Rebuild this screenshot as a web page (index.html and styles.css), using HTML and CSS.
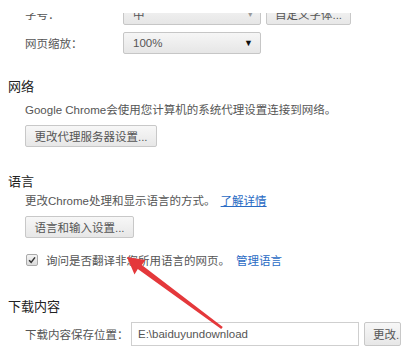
FILE: index.html
```html
<!DOCTYPE html>
<html lang="zh-CN">
<head>
<meta charset="utf-8">
<title>设置</title>
<link rel="stylesheet" href="styles.css">
</head>
<body>
<div class="page">
  <div class="clip">
    <div class="row">
      <span class="label">字号：</span>
      <span class="select"><span>中</span><span class="caret small">▾</span></span>
      <span class="btn font-btn">自定义字体...</span>
    </div>
  </div>
  <div class="row zoom-row">
    <span class="label">网页缩放：</span>
    <span class="select"><span>100%</span><span class="caret">▼</span></span>
  </div>

  <section class="sec net">
    <h3>网络</h3>
    <p>Google Chrome会使用您计算机的系统代理设置连接到网络。</p>
    <span class="btn proxy-btn">更改代理服务器设置...</span>
  </section>

  <section class="sec lang">
    <h3>语言</h3>
    <p>更改Chrome处理和显示语言的方式。 <a class="link" href="#">了解详情</a></p>
    <span class="btn lang-btn">语言和输入设置...</span>
    <div class="check-row">
      <span class="checkbox"><svg viewBox="0 0 12 12" width="12" height="12"><path d="M2.5 6.2 L5 8.8 L9.6 2.8" fill="none" stroke="#333" stroke-width="1.8"/></svg></span>
      <span>询问是否翻译非您所用语言的网页。</span>
      <a class="link" href="#">管理语言</a>
    </div>
  </section>

  <section class="sec dl">
    <h3>下载内容</h3>
    <div class="dl-row">
      <span class="dl-label">下载内容保存位置：</span>
      <span class="input">E:\baiduyundownload</span>
      <span class="btn change-btn">更改...</span>
    </div>
  </section>

  <svg class="arrow" width="416" height="353" viewBox="0 0 416 353">
    <defs><filter id="soft"><feGaussianBlur stdDeviation="0.5"/></filter></defs>
    <polygon filter="url(#soft)" fill="#e4383b" points="127,244 145.5,247 141.8,252 222.8,314.1 221.2,315.9 137.8,256 134.5,261.5"/>
  </svg>
</div>
</body>
</html>
```

FILE: styles.css
```css
html, body {
  margin: 0;
  padding: 0;
  background: #fff;
}
body {
  font-family: "Liberation Sans", "Noto Sans CJK SC", sans-serif;
  font-size: 11.5px;
  color: #444;
  width: 416px;
  height: 353px;
  overflow: hidden;
}
.page {
  position: relative;
  width: 416px;
  height: 353px;
  padding-left: 8px;
  box-sizing: border-box;
}
.clip {
  margin-top: 13px;
  height: 12px;
  overflow: hidden;
  display: flex;
  flex-direction: column;
  justify-content: flex-end;
}
.row {
  display: flex;
  align-items: center;
  flex-shrink: 0;
  padding-left: 17px;
}
.label {
  width: 98px;
  color: #555;
  white-space: nowrap;
}
.select {
  box-sizing: border-box;
  width: 138px;
  height: 23px;
  display: flex;
  align-items: center;
  justify-content: space-between;
  padding: 0 7px 0 9px;
  border: 1px solid #c6c6c6;
  border-radius: 2px;
  background: linear-gradient(#f6f6f6, #e6e6e6);
  color: #555;
}
.caret {
  font-size: 9px;
  color: #111;
}
.caret.small {
  color: #999;
}
.font-btn {
  margin-left: 5px;
  width: 85px;
  height: 22px;
}
.zoom-row {
  margin-top: 7px;
}
.zoom-row .select {
  height: 22px;
}
.btn {
  box-sizing: border-box;
  display: inline-flex;
  align-items: center;
  justify-content: center;
  height: 22px;
  border: 1px solid #c8c8c8;
  border-radius: 2px;
  background: linear-gradient(#f7f7f7, #e7e7e7);
  color: #555;
  white-space: nowrap;
}
.sec h3 {
  margin: 0;
  font-size: 13px;
  line-height: 16px;
  font-weight: normal;
  color: #222;
}
.sec p {
  margin: 7px 0 0 17px;
  line-height: 16px;
  color: #555;
  white-space: nowrap;
}
.sec .btn {
  margin-left: 17px;
  margin-top: 7px;
}
.net {
  margin-top: 25px;
}
.proxy-btn {
  width: 132px;
}
.lang {
  margin-top: 27px;
}
.lang p {
  margin-top: 3px;
}
.lang-btn {
  width: 109px;
}
.link {
  color: #2a6bc4;
  text-decoration: none;
}
.lang p .link {
  text-decoration: underline;
  margin-left: 2px;
}
.check-row {
  display: flex;
  align-items: center;
  margin: 14px 0 0 18px;
  height: 16px;
  color: #555;
  white-space: nowrap;
}
.check-row .link {
  margin-left: 6px;
}
.checkbox {
  box-sizing: border-box;
  width: 12px;
  height: 12px;
  border: 1px solid #aaa;
  border-radius: 2px;
  background: linear-gradient(#f4f4f4, #dcdcdc);
  display: inline-flex;
  align-items: center;
  justify-content: center;
  margin-right: 8px;
}
.checkbox svg {
  width: 10px;
  height: 10px;
}
.dl {
  margin-top: 31px;
}
.dl-row {
  display: flex;
  align-items: center;
  margin: 7px 0 0 17px;
}
.dl-label {
  width: 106px;
  flex-shrink: 0;
  color: #555;
  white-space: nowrap;
}
.input {
  box-sizing: border-box;
  flex-shrink: 0;
  width: 228px;
  height: 24px;
  border: 1px solid #cfcfcf;
  display: flex;
  align-items: center;
  padding-left: 6px;
  color: #555;
}
.dl-row .change-btn {
  flex-shrink: 0;
  margin-left: 5px;
  margin-top: 0;
  width: 37px;
  height: 24px;
  overflow: hidden;
  justify-content: flex-start;
  padding-left: 8px;
}
.arrow {
  position: absolute;
  left: 0;
  top: 0;
  pointer-events: none;
}
```
